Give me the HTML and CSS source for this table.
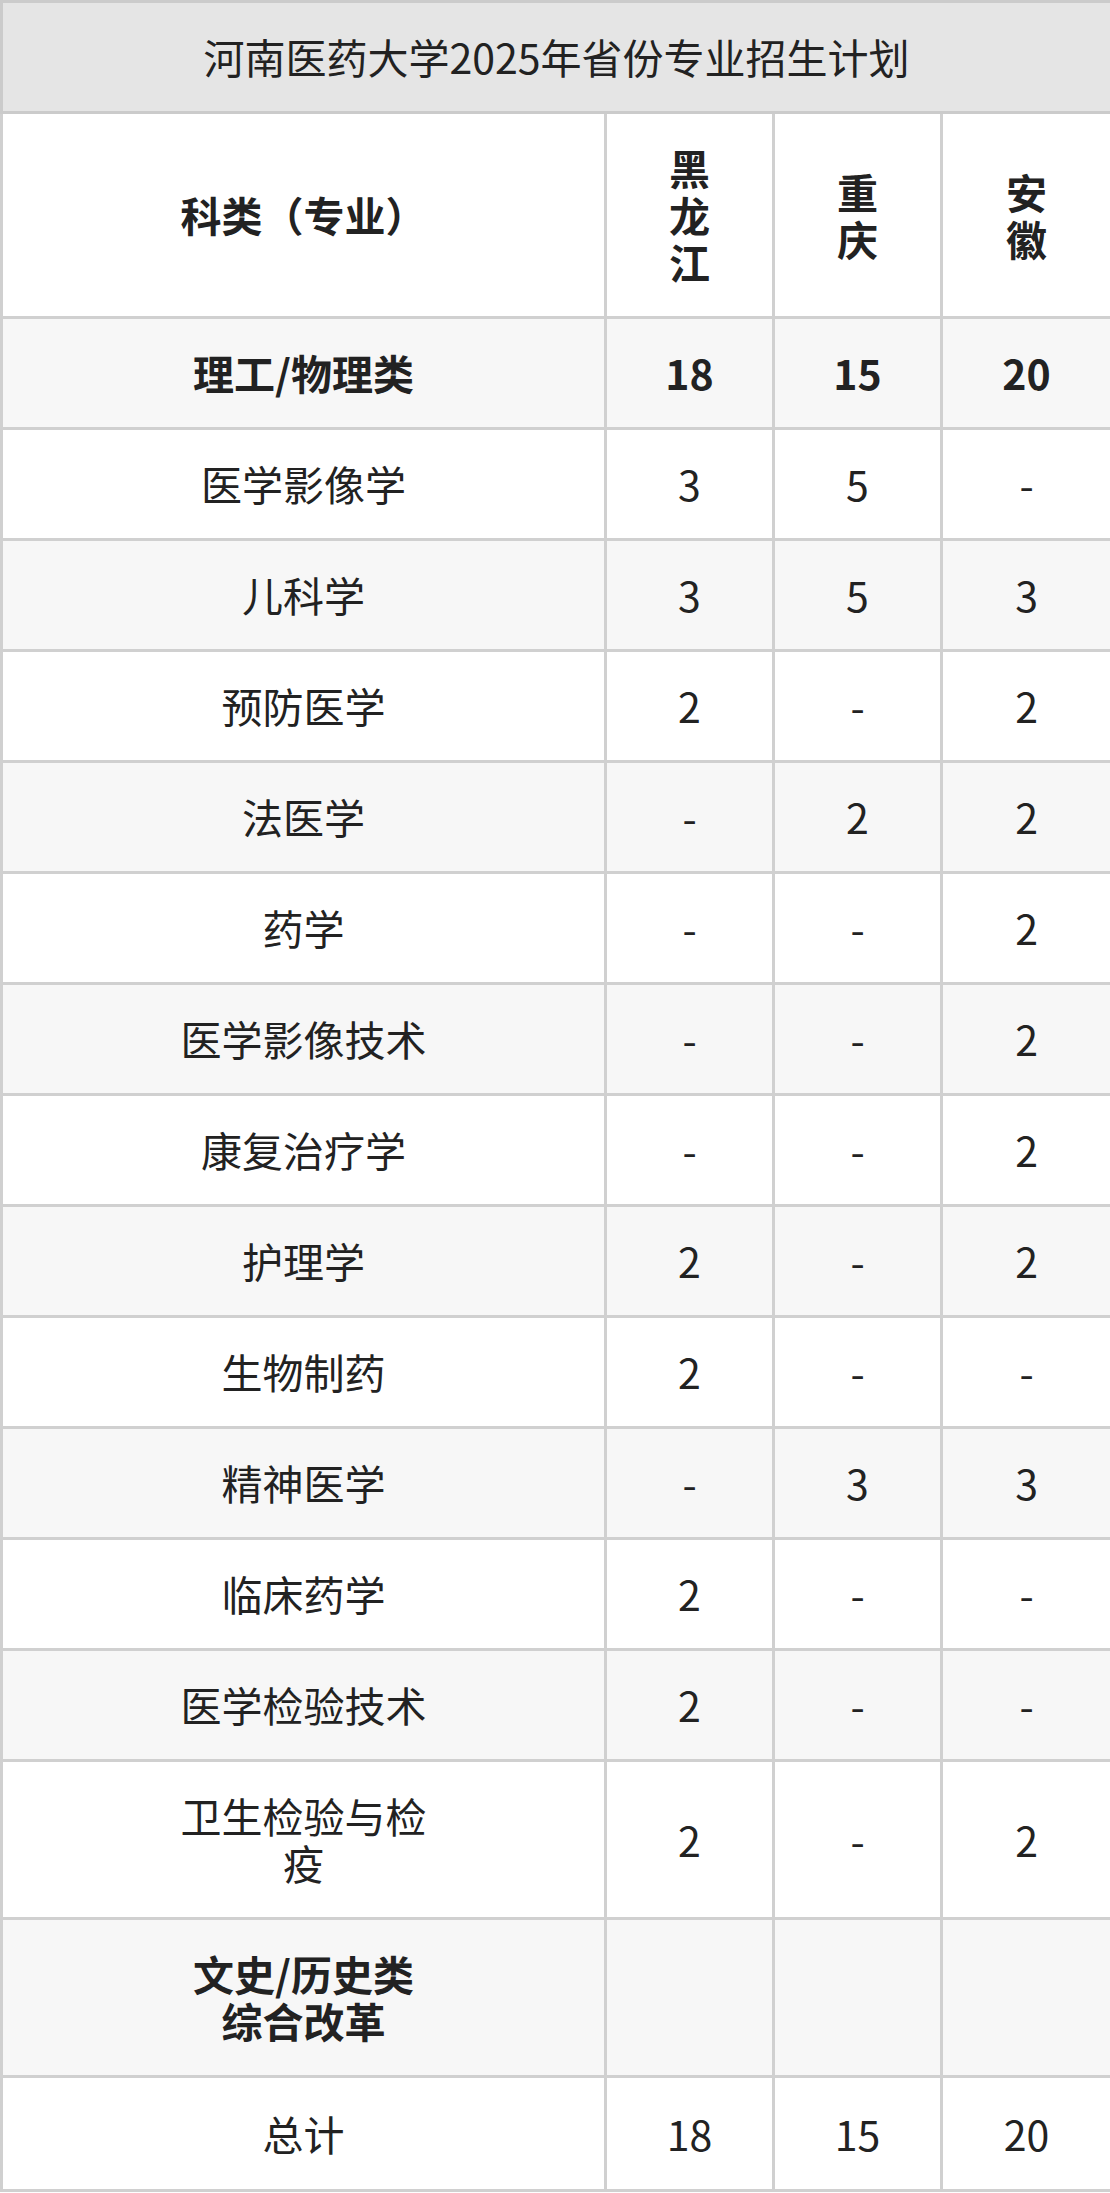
FILE: index.html
```html
<!DOCTYPE html>
<html lang="zh-CN">
<head>
<meta charset="utf-8">
<title>河南医药大学2025年省份专业招生计划</title>
<link rel="stylesheet" href="styles.css">
</head>
<body>
<table class="plan">
  <colgroup>
    <col class="c-major">
    <col class="c-prov">
    <col class="c-prov">
    <col class="c-prov c-last">
  </colgroup>
  <thead>
    <tr class="title-row"><th colspan="4">河南医药大学2025年省份专业招生计划</th></tr>
    <tr class="head-row">
      <th>科类（专业）</th>
      <th>黑<br>龙<br>江</th>
      <th>重<br>庆</th>
      <th>安<br>徽</th>
    </tr>
  </thead>
  <tbody>
    <tr class="alt bold"><td>理工/物理类</td><td>18</td><td>15</td><td>20</td></tr>
    <tr><td>医学影像学</td><td>3</td><td>5</td><td>-</td></tr>
    <tr class="alt"><td>儿科学</td><td>3</td><td>5</td><td>3</td></tr>
    <tr><td>预防医学</td><td>2</td><td>-</td><td>2</td></tr>
    <tr class="alt"><td>法医学</td><td>-</td><td>2</td><td>2</td></tr>
    <tr><td>药学</td><td>-</td><td>-</td><td>2</td></tr>
    <tr class="alt"><td>医学影像技术</td><td>-</td><td>-</td><td>2</td></tr>
    <tr><td>康复治疗学</td><td>-</td><td>-</td><td>2</td></tr>
    <tr class="alt"><td>护理学</td><td>2</td><td>-</td><td>2</td></tr>
    <tr><td>生物制药</td><td>2</td><td>-</td><td>-</td></tr>
    <tr class="alt"><td>精神医学</td><td>-</td><td>3</td><td>3</td></tr>
    <tr><td>临床药学</td><td>2</td><td>-</td><td>-</td></tr>
    <tr class="alt"><td>医学检验技术</td><td>2</td><td>-</td><td>-</td></tr>
    <tr><td>卫生检验与检<br>疫</td><td>2</td><td>-</td><td>2</td></tr>
    <tr class="alt bold"><td>文史/历史类<br>综合改革</td><td></td><td></td><td></td></tr>
    <tr class="total"><td>总计</td><td>18</td><td>15</td><td>20</td></tr>
  </tbody>
</table>
</body>
</html>
```

FILE: styles.css
```css
html, body {
  margin: 0;
  padding: 0;
  background: #ffffff;
}

body {
  font-family: "Noto Sans CJK SC", "Noto Sans", sans-serif;
  color: #222222;
}

.plan {
  width: 1110px;
  border-collapse: collapse;
  table-layout: fixed;
}

.c-major { width: 604px; }
.c-prov { width: 168px; }
.c-last { width: 170px; }

.plan th,
.plan td {
  border: 3px solid #d0d0d0;
  padding: 30px 10px 31px;
  font-size: 41px;
  line-height: 47px;
  text-align: center;
  vertical-align: middle;
}

.plan th {
  font-weight: 700;
}

.title-row th {
  background: #e5e5e5;
  font-weight: 400;
  border-color: #cbcbcb;
}

.head-row th {
  background: #ffffff;
}

.alt td {
  background: #f7f7f7;
}

.bold td {
  font-weight: 700;
}

.total td {
  padding-top: 32px;
  padding-bottom: 32px;
}
```
